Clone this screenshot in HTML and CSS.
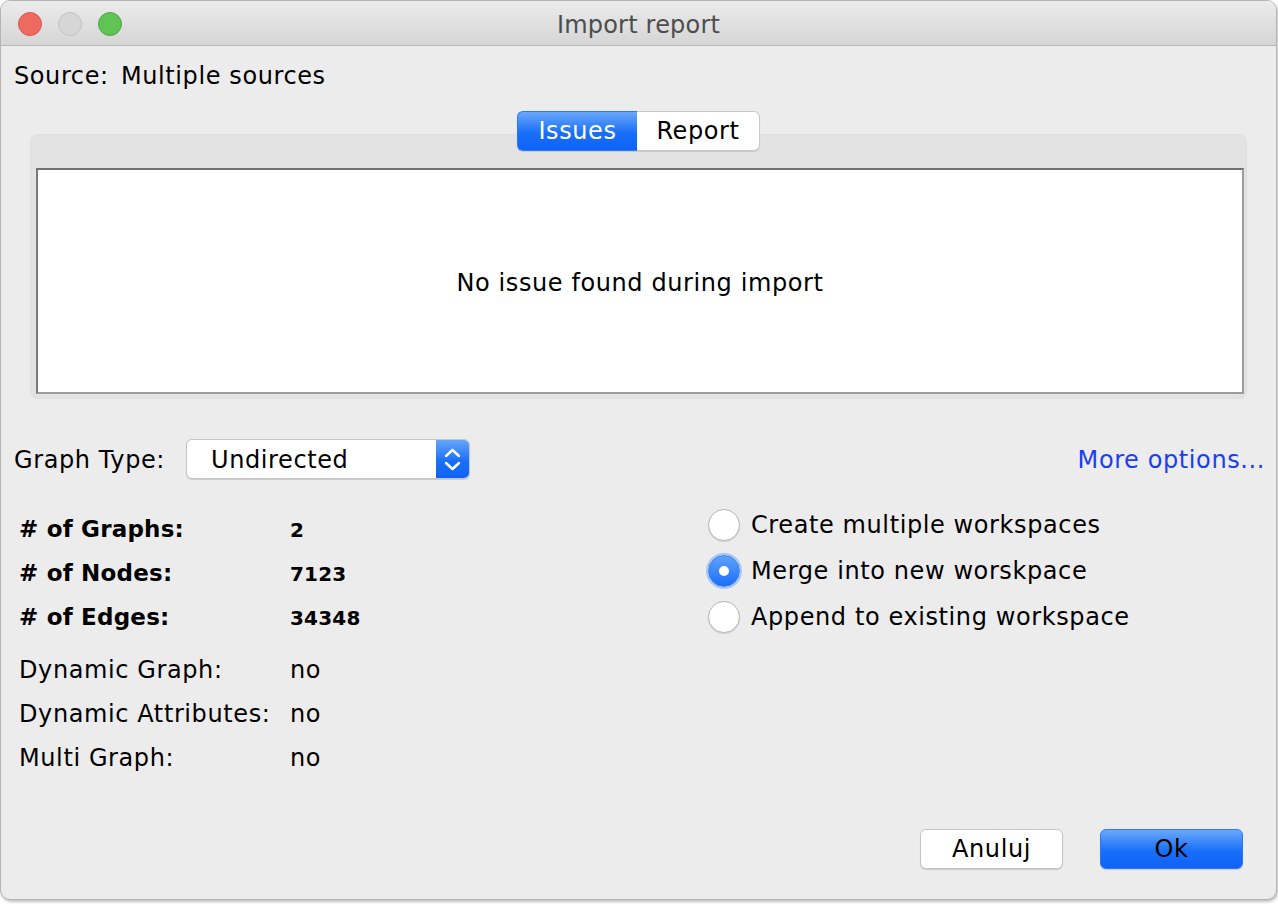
FILE: index.html
```html
<!DOCTYPE html>
<html>
<head>
<meta charset="utf-8">
<link rel="stylesheet" href="styles.css">
</head>
<body>
<div class="window">
  <div class="titlebar">
    <div class="lights">
      <span class="light red"></span>
      <span class="light gray"></span>
      <span class="light green"></span>
    </div>
    <div class="title">Import report</div>
  </div>
  <div class="content">
    <div class="source"><span class="source-label">Source:</span> Multiple sources</div>
    <div class="tabarea">
      <div class="tabs">
        <div class="tab active">Issues</div>
        <div class="tab">Report</div>
      </div>
      <div class="tabpanel">
        <div class="issues">No issue found during import</div>
      </div>
    </div>
    <div class="typerow">
      <span class="label">Graph Type:</span>
      <div class="select">
        <span class="select-text">Undirected</span>
        <span class="stepper">
          <svg width="33" height="39" viewBox="0 0 33 39"><path d="M10 16 L16.5 10 L23 16" fill="none" stroke="#fff" stroke-width="2.4" stroke-linecap="round" stroke-linejoin="round"/><path d="M10 23 L16.5 29 L23 23" fill="none" stroke="#fff" stroke-width="2.4" stroke-linecap="round" stroke-linejoin="round"/></svg>
        </span>
      </div>
      <span class="more">More options...</span>
    </div>
    <div class="stats-row">
      <div class="stats">
        <div class="stat bold"><span class="k">#&nbsp;of Graphs:</span><span class="v">2</span></div>
        <div class="stat bold"><span class="k">#&nbsp;of Nodes:</span><span class="v">7123</span></div>
        <div class="stat bold"><span class="k">#&nbsp;of Edges:</span><span class="v">34348</span></div>
        <div class="stat plain first"><span class="k">Dynamic Graph:</span><span class="v">no</span></div>
        <div class="stat plain"><span class="k">Dynamic Attributes:</span><span class="v">no</span></div>
        <div class="stat plain"><span class="k">Multi Graph:</span><span class="v">no</span></div>
      </div>
      <div class="radios">
        <div class="radio"><span class="circle"></span>Create multiple workspaces</div>
        <div class="radio"><span class="circle checked"></span>Merge into new worskpace</div>
        <div class="radio"><span class="circle"></span>Append to existing workspace</div>
      </div>
    </div>
    <div class="buttons">
      <div class="btn">Anuluj</div>
      <div class="btn primary">Ok</div>
    </div>
  </div>
</div>
</body>
</html>
```

FILE: styles.css
```css
html, body {
  margin: 0;
  padding: 0;
  background: #ffffff;
}
body {
  width: 1278px;
  height: 904px;
  overflow: hidden;
  font-family: "DejaVu Sans", "Liberation Sans", sans-serif;
  color: #000;
  font-size: 23px;
  letter-spacing: 0.6px;
}
.window {
  box-sizing: border-box;
  width: 1277px;
  height: 900px;
  border: 1px solid #b4b4b4;
  border-radius: 10px;
  background: #ececec;
  overflow: hidden;
  display: flex;
  flex-direction: column;
  box-shadow: 1px 2px 3px rgba(0,0,0,0.25);
}
.titlebar {
  height: 44px;
  flex: none;
  background: linear-gradient(#ebebeb, #d5d5d5);
  border-bottom: 1px solid #b7b7b7;
  display: flex;
  align-items: center;
  position: relative;
}
.lights {
  display: flex;
  gap: 16px;
  padding-left: 17px;
  margin-top: 1px;
}
.light {
  width: 24px;
  height: 24px;
  border-radius: 50%;
  box-sizing: border-box;
}
.light.red { background: #ee6a5f; border: 1px solid #d9574d; }
.light.gray { background: #d6d6d6; border: 1px solid #c2c2c2; }
.light.green { background: #5fc453; border: 1px solid #4ea843; }
.title {
  position: absolute;
  left: 0;
  right: 0;
  top: 0;
  line-height: 49px;
  text-align: center;
  font-size: 24px;
  letter-spacing: 0.2px;
  color: #4d4d4d;
}
.content {
  flex: 1;
  display: flex;
  flex-direction: column;
  padding: 0 0 0 13px;
}
.source {
  font-size: 24px;
  margin-top: 16px;
  line-height: 28px;
}
.source-label {
  margin-right: 4px;
}
.tabarea {
  position: relative;
  margin: 21px 29px 0 16px;
  padding-top: 23px;
}
.tabs {
  position: absolute;
  top: 0;
  left: 0;
  right: 0;
  display: flex;
  justify-content: center;
  z-index: 2;
}
.tab {
  box-sizing: border-box;
  height: 40px;
  line-height: 39px;
  font-size: 24px;
  background: #fff;
  border: 1px solid #c8c8c8;
  box-shadow: 0 1px 1px rgba(0,0,0,0.12);
}
.tab:first-child { border-radius: 6px 0 0 6px; border-right: none; }
.tab:last-child { border-radius: 0 6px 6px 0; border-left: none; width: 123px; text-align: center; }
.tab.active {
  width: 120px;
  text-align: center;
  color: #fff;
  background: linear-gradient(#6aa8fb, #1a6ff8 55%, #0e62f7);
  border-color: #2d78f3;
}
.tabpanel {
  background: #e3e3e3;
  border-radius: 8px;
  border: 1px solid #dedede;
  padding: 33px 2px 4px 5px;
}
.issues {
  box-sizing: border-box;
  height: 226px;
  background: #fff;
  border: 2px solid #9c9c9c;
  border-top-color: #707070;
  border-left-color: #7a7a7a;
  display: flex;
  align-items: center;
  justify-content: center;
  font-size: 24px;
  padding-top: 4px;
}
.typerow {
  display: flex;
  align-items: center;
  margin-top: 40px;
  height: 40px;
  font-size: 24px;
}
.typerow .label {
  width: 172px;
  flex: none;
  padding-top: 1px;
}
.select {
  box-sizing: border-box;
  width: 284px;
  height: 40px;
  background: #fff;
  border: 1px solid #c5c5c5;
  border-radius: 6px;
  display: flex;
  align-items: center;
  overflow: hidden;
  box-shadow: 0 1px 1px rgba(0,0,0,0.15);
}
.select-text {
  flex: 1;
  padding-left: 24px;
  padding-top: 1px;
}
.stepper {
  width: 33px;
  height: 40px;
  background: linear-gradient(#6aa8fb, #1a6ff8 55%, #0e62f7);
  display: flex;
  align-items: center;
  justify-content: center;
}
.more {
  margin-left: auto;
  margin-right: 11px;
  color: #1a3ef6;
  padding-top: 1px;
}
.stats-row {
  display: flex;
  margin-top: 28px;
}
.stats {
  width: 689px;
  padding-left: 5px;
  flex: none;
}
.stat {
  display: flex;
  align-items: baseline;
  height: 44px;
  line-height: 44px;
}
.stat .k { width: 271px; flex: none; }
.stat.bold .k { font-weight: bold; font-size: 23px; letter-spacing: 0.2px; }
.stat.bold .v { font-weight: bold; font-size: 20px; letter-spacing: 0.2px; }
.stat.plain { font-size: 24px; }
.stat.plain.first { margin-top: 9px; }
.radios {
  display: flex;
  flex-direction: column;
  margin-top: -5px;
}
.radio {
  display: flex;
  align-items: center;
  height: 46px;
  font-size: 24px;
  gap: 11px;
}
.circle {
  box-sizing: border-box;
  width: 32px;
  height: 32px;
  border-radius: 50%;
  background: #fff;
  border: 1px solid #b8b8b8;
  box-shadow: 0 1px 1px rgba(0,0,0,0.12);
  position: relative;
  flex: none;
}
.circle.checked {
  background: linear-gradient(#5ea2fb, #1b6ff8);
  border-color: #3b82f3;
  box-shadow: 0 0 0 2px rgba(90,150,250,0.45);
}
.circle.checked::after {
  content: "";
  position: absolute;
  left: 50%;
  top: 50%;
  width: 10px;
  height: 10px;
  margin: -5px 0 0 -5px;
  border-radius: 50%;
  background: #fff;
}
.buttons {
  margin-top: auto;
  margin-bottom: 30px;
  display: flex;
  justify-content: flex-end;
  gap: 37px;
  padding-right: 33px;
}
.btn {
  box-sizing: border-box;
  width: 143px;
  height: 40px;
  line-height: 38px;
  text-align: center;
  font-size: 24px;
  background: #fff;
  border: 1px solid #c5c5c5;
  border-radius: 6px;
  box-shadow: 0 1px 1px rgba(0,0,0,0.15);
}
.btn.primary {
  background: linear-gradient(#6aa8fb, #1a6ff8 55%, #0e62f7);
  border-color: #2d78f3;
  color: #000;
}
```
